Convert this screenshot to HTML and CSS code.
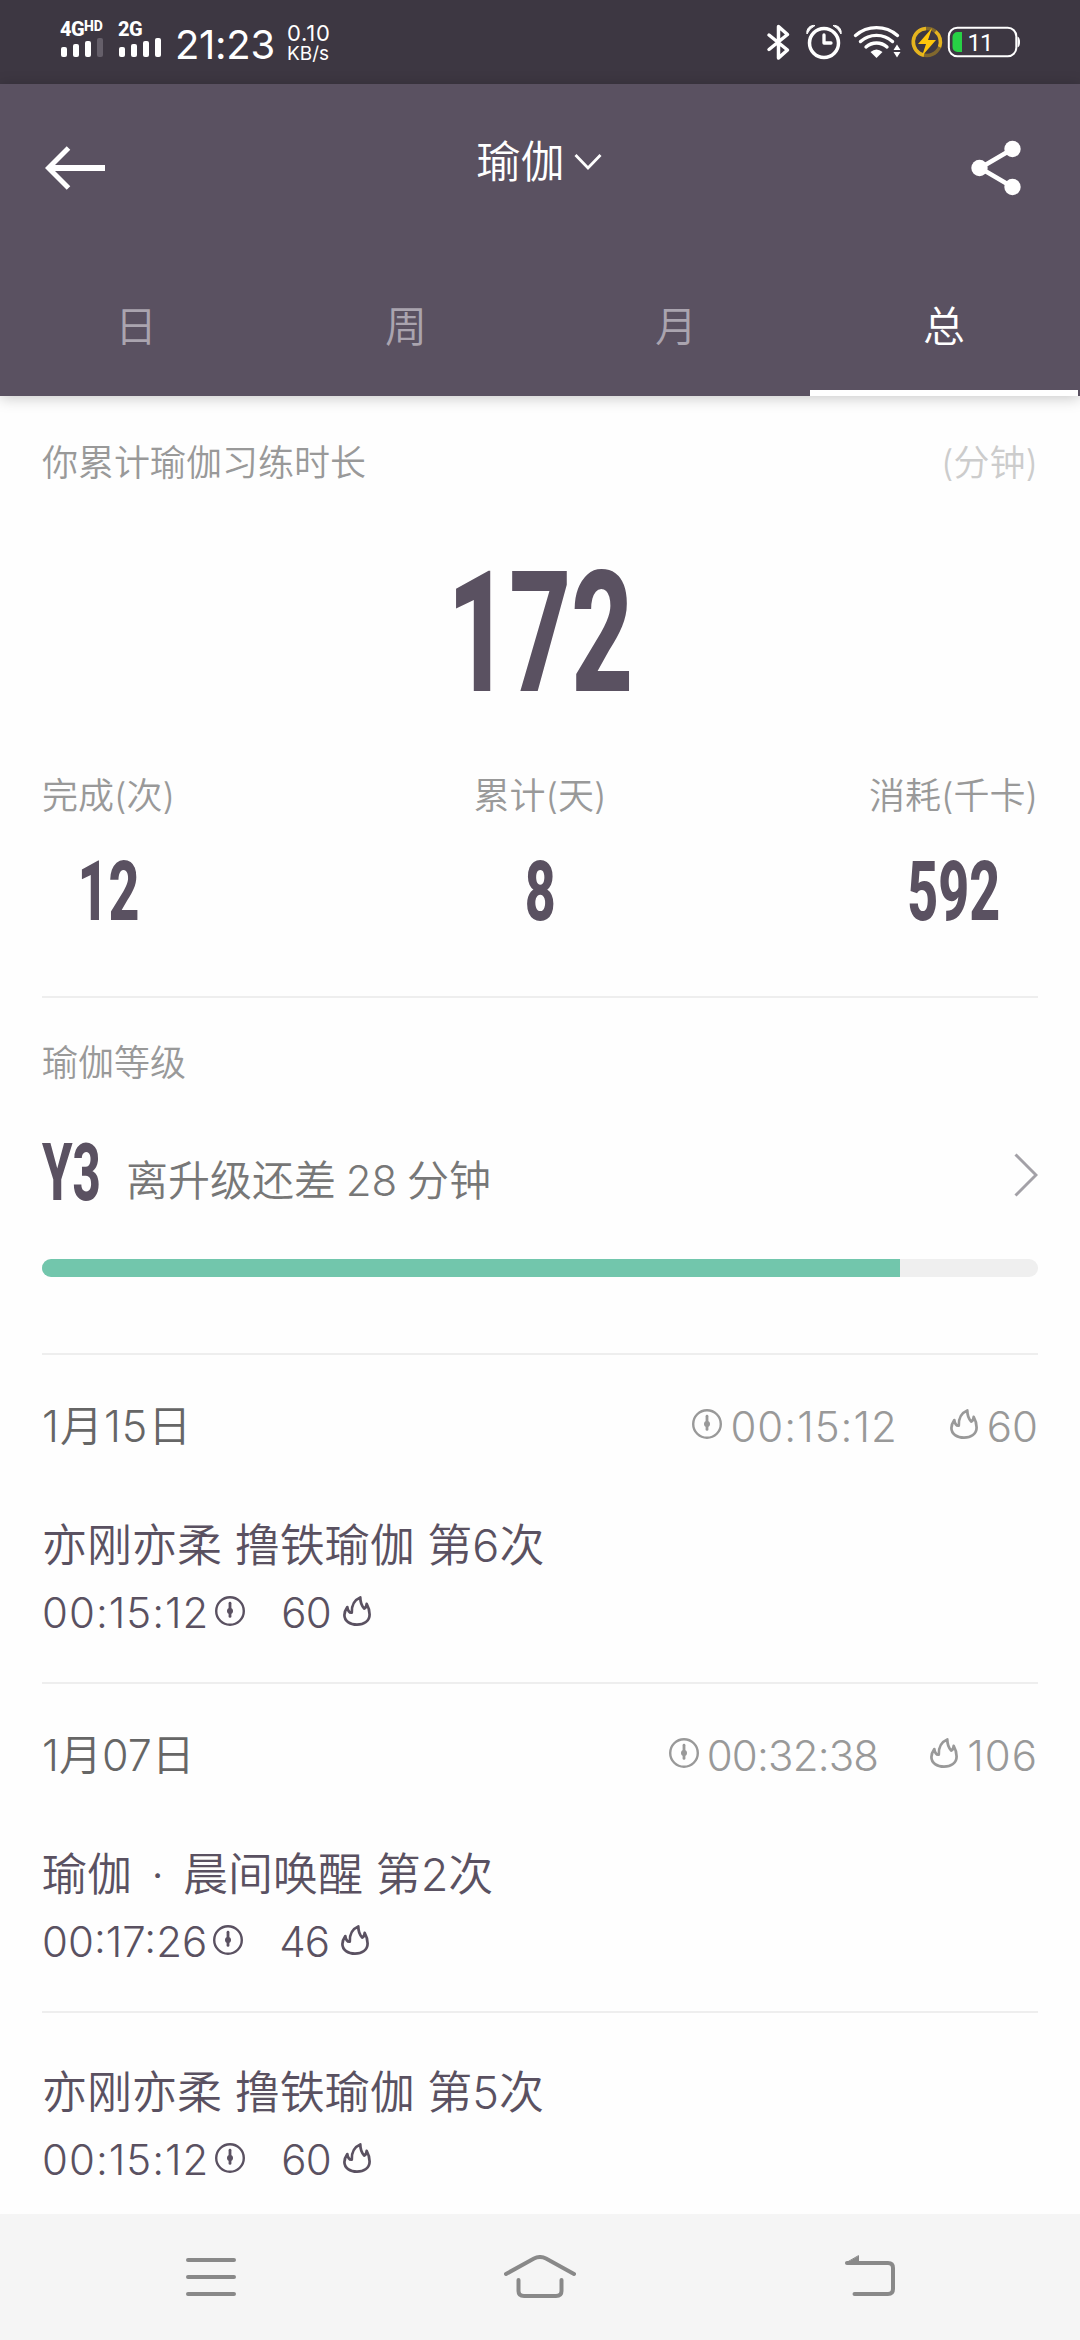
FILE: index.html
```html
<!DOCTYPE html>
<html lang="zh-CN">
<head>
<meta charset="utf-8">
<title>瑜伽</title>
<link rel="stylesheet" href="styles.css">
</head>
<body>
<svg class="defs" aria-hidden="true">
  <symbol id="clock" viewBox="0 0 30 30">
    <circle cx="15" cy="15" r="13.8" fill="none" stroke="currentColor" stroke-width="2.4"/>
    <path d="M15 7.2v13.2" stroke="currentColor" stroke-width="2.8" stroke-linecap="round"/>
    <circle cx="15" cy="15" r="3" fill="currentColor"/>
  </symbol>
  <symbol id="flame" viewBox="0 0 28 30">
    <path d="M4.300 11C2.200 14 1.400 16.500 1.400 19C1.400 25 7 28.600 14 28.600S26.600 25 26.600 18.400C26.600 14.500 25.500 11 23.700 7.800C23.500 10.300 22.800 11.700 21.200 12.500C18.500 9.500 17.300 6 17.300 1.400C12 3.500 8.400 9 8.800 16.600C6.200 16.900 4.800 14.800 4.300 11Z" fill="none" stroke="currentColor" stroke-width="2.700" stroke-linejoin="round"/>
  </symbol>
</svg>
<div class="screen">
  <div class="status">
    <div class="signal">
      <div class="net">4G<span class="hd">HD</span></div>
      <div class="bars"><i class="b1"></i><i class="b2"></i><i class="b3"></i><i class="b4 off"></i></div>
    </div>
    <div class="signal second">
      <div class="net">2G</div>
      <div class="bars"><i class="b1"></i><i class="b2"></i><i class="b3"></i><i class="b4"></i></div>
    </div>
    <div class="time">21:23</div>
    <div class="speed"><span class="rate">0.10</span><span class="unit">KB/s</span></div>
    <svg class="tray" width="320" height="84" viewBox="0 0 320 84" fill="none">
      <path d="M29 35L47.500 50L38.500 58V26.500L47.500 34.500L29 49.500" stroke="#fff" stroke-width="3.500" stroke-linecap="round" stroke-linejoin="round"/>
      <circle cx="84" cy="43" r="14.500" stroke="#fff" stroke-width="3.500"/>
      <path d="M84 35v8h7" stroke="#fff" stroke-width="3.300" stroke-linecap="round" stroke-linejoin="round"/>
      <path d="M67 34a17 17 0 0 1 8-8.500a7 7 0 0 0-8 8.500zM101 34a17 17 0 0 0-8-8.500a7 7 0 0 1 8 8.500z" fill="#fff" stroke="#fff"/>
      <path d="M115.500 35.500a32 32 0 0 1 42 0M120.500 41.500a24 24 0 0 1 32 0M126 47a16 16 0 0 1 21 0" stroke="#fff" stroke-width="3.400" stroke-linecap="round"/>
      <path d="M130.500 52q6-5 12 0l-6 6z" fill="#fff"/>
      <path d="M157 44.500l3.500 5.500h-7zM153.500 52h7l-3.500 5.500z" fill="#fff"/>
      <circle cx="187" cy="42" r="13.500" stroke="#81682e" stroke-width="3.500"/>
      <path d="M186 28.500a13.500 13.500 0 0 0-2 26.700M195.500 31.500a13.500 13.500 0 0 1 4 15.500" stroke="#e5b41f" stroke-width="3.500"/>
      <path d="M192 28L178 44h8l-4 12l14-16h-8z" fill="#ffc60a"/>
      <rect x="208.800" y="27.800" width="67.500" height="28.400" rx="8.500" stroke="#fff" stroke-width="2"/>
      <path d="M222 32h-4.500a5 5 0 0 0-5 5v10a5 5 0 0 0 5 5h4.500z" fill="#27d145"/>
      <path d="M277.500 36.500q2.500 1 2.500 5.500t-2.500 5.500z" fill="#fff"/>
      <text x="240" y="51" class="battery" text-anchor="middle">11</text>
    </svg>
  </div>

  <header class="header">
    <div class="topbar">
      <svg class="back" width="60" height="44" viewBox="0 0 60 44" fill="none" stroke="#fff"><path d="M3 22H60" stroke-width="6"/><path d="M23.500 2L3.500 22L23.500 42" stroke-width="5"/></svg>
      <div class="title">瑜伽<svg width="28" height="18" viewBox="0 0 28 18" fill="none" stroke="#fff" stroke-width="2.800"><path d="M1.500 2L14 15L26.500 2"/></svg></div>
      <svg class="share" width="50" height="56" viewBox="0 0 50 56"><path d="M41.500 9L9 28L41.500 47" fill="none" stroke="#fff" stroke-width="4.500"/><g fill="#fff"><circle cx="8.500" cy="28" r="8.200"/><circle cx="41.500" cy="9" r="8.200"/><circle cx="41.500" cy="47" r="8.200"/></g></svg>
    </div>
    <nav class="tabs">
      <div class="tab">日</div><div class="tab">周</div><div class="tab">月</div><div class="tab active">总</div>
    </nav>
  </header>

  <main class="content">
    <section class="summary">
      <div class="caption"><span>你累计瑜伽习练时长</span><span class="hint">(分钟)</span></div>
      <div class="total"><span class="din">172</span></div>
      <div class="stats">
        <div class="stat"><div class="label">完成(次)</div><div class="value"><span class="din">12</span></div></div>
        <div class="stat"><div class="label">累计(天)</div><div class="value"><span class="din">8</span></div></div>
        <div class="stat"><div class="label">消耗(千卡)</div><div class="value"><span class="din">592</span></div></div>
      </div>
    </section>

    <section class="level">
      <div class="caption">瑜伽等级</div>
      <div class="level-row">
        <div class="rank"><span class="din">Y3</span></div>
        <div class="need">离升级还差 28 分钟</div>
        <svg width="24" height="44" viewBox="0 0 24 44" fill="none" stroke="#a3a1a7" stroke-width="3"><path d="M1.500 1.500L22 22L1.500 42.500"/></svg>
      </div>
      <div class="progress"><div class="fill" style="width:86.1%"></div></div>
    </section>

    <section class="day">
      <div class="day-head">
        <div class="date loose">1月15日</div>
        <div class="sum"><svg class="clock"><use href="#clock"/></svg><span class="loose">00:15:12</span><svg class="flame"><use href="#flame"/></svg><span>60</span></div>
      </div>
      <article class="session">
        <div class="name">亦刚亦柔 撸铁瑜伽 第6次</div>
        <div class="meta"><span class="loose">00:15:12</span><svg class="clock"><use href="#clock"/></svg><span class="kcal">60</span><svg class="flame"><use href="#flame"/></svg></div>
      </article>
    </section>

    <section class="day">
      <div class="day-head">
        <div class="date">1月07日</div>
        <div class="sum"><svg class="clock"><use href="#clock"/></svg><span class="tight">00:32:38</span><svg class="flame"><use href="#flame"/></svg><span class="loose">106</span></div>
      </div>
      <article class="session">
        <div class="name">瑜伽<span class="dot">·</span>晨间唤醒 第2次</div>
        <div class="meta"><span>00:17:26</span><svg class="clock"><use href="#clock"/></svg><span class="kcal">46</span><svg class="flame"><use href="#flame"/></svg></div>
      </article>
      <article class="session follow">
        <div class="name">亦刚亦柔 撸铁瑜伽 第5次</div>
        <div class="meta"><span class="loose">00:15:12</span><svg class="clock"><use href="#clock"/></svg><span class="kcal">60</span><svg class="flame"><use href="#flame"/></svg></div>
      </article>
    </section>
  </main>

  <footer class="navbar">
    <svg width="50" height="44" viewBox="0 0 50 44" fill="none" stroke="#898989" stroke-width="4" stroke-linecap="round"><path d="M2 5H48M2 22H48M2 39H48"/></svg>
    <svg width="72" height="44" viewBox="0 0 72 44" fill="none" stroke="#898989" stroke-width="4" stroke-linecap="round"><path d="M2 19L30 3.500Q36 .5 42 3.500L70 19M14.500 25V36Q14.500 41 20 41H52Q57.500 41 57.500 36V25"/></svg>
    <svg width="52" height="44" viewBox="0 0 52 44" fill="none" stroke="#898989" stroke-width="4" stroke-linecap="round"><path d="M3 8H44Q49 8 49 13V34Q49 39 44 39H10.500"/><path d="M14.500 1V8H2Z" fill="#898989" stroke-width="1"/></svg>
  </footer>
</div>
</body>
</html>
```
FILE: styles.css
```css
* { box-sizing: border-box; }
body { margin: 0; background: #fff; font-family: Inter, "Noto Sans CJK SC", sans-serif; font-weight: 350; }
svg { display: block; flex: none; }
.defs { position: absolute; width: 0; height: 0; }
.screen { width: 1080px; height: 2340px; display: flex; flex-direction: column; overflow: hidden; background: #fefefe; }

/* status bar */
.status { height: 84px; flex: none; background: #3d3742; color: #fff; display: flex; padding-left: 60px; }
.signal { width: 58px; padding-top: 21px; }
.signal.second { width: 57px; }
.net { height: 17px; line-height: 17px; font-family: Roboto, sans-serif; font-size: 20px; font-weight: 800; letter-spacing: -0.6px; display: flex; white-space: nowrap; }
.hd { font-size: 14px; line-height: 11px; letter-spacing: 0; }
.bars { height: 19px; display: flex; align-items: flex-end; gap: 6px; padding-left: 1px; }
.bars i { width: 6px; border-radius: 2px; background: #fff; }
.bars .b1 { height: 10px; } .bars .b2 { height: 13px; } .bars .b3 { height: 16px; } .bars .b4 { height: 19px; }
.bars .off { background: #655f6a; }
.time { width: 112px; font-size: 40px; font-weight: 400; line-height: 89px; letter-spacing: -0.3px; }
.speed { width: 60px; display: flex; flex-direction: column; padding-top: 21px; font-weight: 400; }
.rate { font-size: 22px; line-height: 24px; letter-spacing: 0.8px; }
.unit { font-size: 19px; line-height: 17px; }
.tray { margin-left: auto; margin-right: 20px; }
.battery { font: 400 24px Roboto, sans-serif; letter-spacing: -1px; fill: #fff; }

/* header */
.header { height: 312px; flex: none; background: #5a5161; color: #fff; box-shadow: 0 2px 14px rgba(0,0,0,.22); position: relative; }
.topbar { height: 168px; display: grid; grid-template-columns: 1fr auto 1fr; align-items: center; padding: 0 47px 0 45px; }
.title { display: flex; align-items: center; gap: 9px; font-size: 44px; line-height: 60px; margin-bottom: 12px; }
.share { justify-self: end; margin-right: 12px; }
.tabs { display: flex; height: 144px; padding-right: 2px; }
.tab { flex: 1; text-align: center; font-size: 42px; line-height: 149px; color: #aaa4af; padding-left: 2px; }
.active { color: #fff; border-bottom: 6px solid #fff; height: 144px; padding: 0; }

/* content */
.content { flex: 1; min-height: 0; overflow: hidden; padding: 0 42px; }
.din { display: inline-block; font-family: Roboto, sans-serif; font-weight: 800; transform: scaleX(.64); color: #5a5161; }
.summary { height: 602px; border-bottom: 2px solid #eee; }
.caption { display: flex; justify-content: space-between; font-size: 36px; line-height: 134px; color: #999; }
.hint { color: #ccc; }
.total { height: 200px; line-height: 200px; font-size: 168px; text-align: center; }
.stats { display: grid; grid-template-columns: 1fr auto 1fr; padding-top: 33px; }
.stat:first-child { justify-self: start; }
.stat:last-child { justify-self: end; }
.label { font-size: 36px; line-height: 66px; color: #999; }
.value { text-align: center; font-size: 84px; line-height: 122px; }
.level { height: 357px; border-bottom: 2px solid #eee; }
.level .caption { line-height: 130px; }
.level-row { height: 94px; display: flex; align-items: center; }
.rank { width: 84px; font-size: 79px; line-height: 88px; padding-bottom: 6px; }
.rank .din { transform: scaleX(.62); transform-origin: left; }
.need { flex: 1; font-size: 42px; line-height: 80px; padding-top: 12px; color: #777; white-space: nowrap; word-spacing: -2px; }
.progress { height: 18px; margin-top: 37px; border-radius: 9px; overflow: hidden; background: #efefef; }
.fill { height: 18px; background: #72c6ac; }

.day-head { height: 143px; display: flex; justify-content: space-between; line-height: 143px; font-size: 42px; }
.date { color: #666; font-size: 43px; }
.loose { letter-spacing: 1px; }
.tight { letter-spacing: -0.8px; }
.sum { display: flex; align-items: center; color: #999; }
.clock { width: 30px; height: 30px; margin-bottom: 5px; }
.flame { width: 28px; height: 30px; margin-bottom: 5px; }
.sum .clock { margin-right: 8px; }
.sum .flame { margin: 0 9px 5px 52px; }
.session { height: 186px; border-bottom: 2px solid #eee; color: #5a5161; }
.name { font-size: 45px; line-height: 96px; white-space: nowrap; }
.dot { display: inline-block; width: 51px; text-align: center; }
.meta { height: 38px; display: flex; align-items: center; font-size: 42px; line-height: 38px; }
.meta .clock { margin-left: 6px; }
.kcal { margin-left: 36px; letter-spacing: -1px; }
.meta .flame { margin-left: 12px; }
.follow { height: auto; padding-top: 32px; border: 0; }

/* system navigation */
.navbar { height: 126px; flex: none; background: #f5f5f5; display: flex; justify-content: space-between; align-items: center; padding: 0 184px 0 186px; }
```
